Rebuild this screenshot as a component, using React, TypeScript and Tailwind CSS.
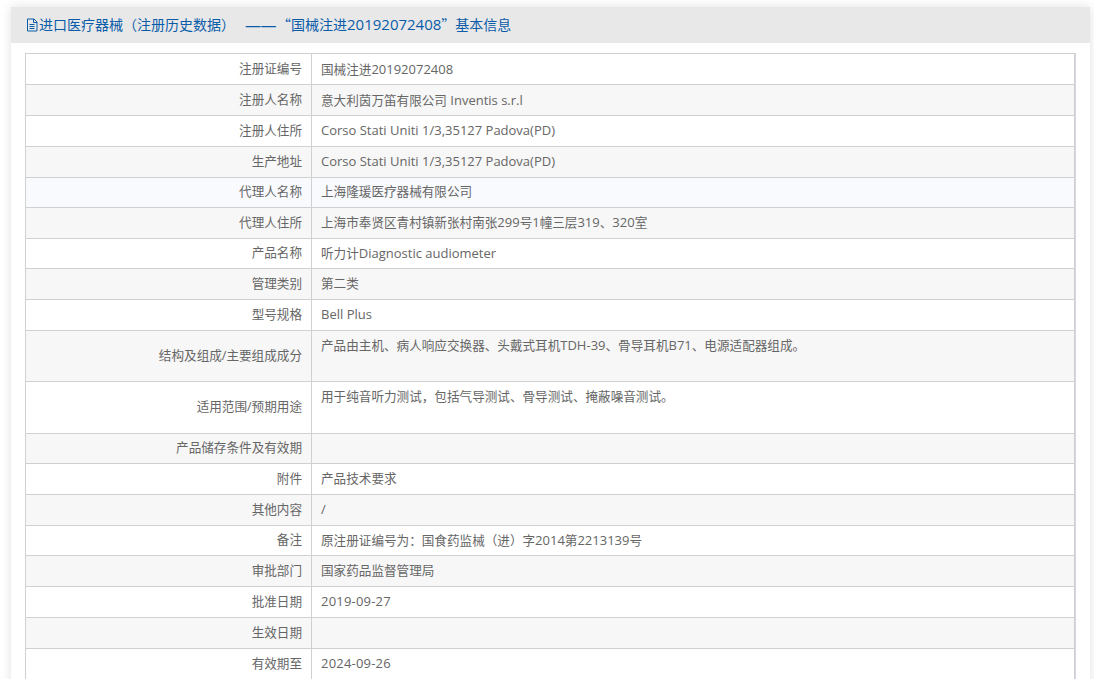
import React from 'react';

interface InfoRow {
  label: string;
  value: string;
  height: number;
}

const rows: InfoRow[] = [
  { label: '注册证编号', value: '国械注进20192072408', height: 31 },
  { label: '注册人名称', value: '意大利茵万笛有限公司 Inventis s.r.l', height: 31 },
  { label: '注册人住所', value: 'Corso Stati Uniti 1/3,35127 Padova(PD)', height: 31 },
  { label: '生产地址', value: 'Corso Stati Uniti 1/3,35127 Padova(PD)', height: 31 },
  { label: '代理人名称', value: '上海隆瑗医疗器械有限公司', height: 30 },
  { label: '代理人住所', value: '上海市奉贤区青村镇新张村南张299号1幢三层319、320室', height: 31 },
  { label: '产品名称', value: '听力计Diagnostic audiometer', height: 30 },
  { label: '管理类别', value: '第二类', height: 31 },
  { label: '型号规格', value: 'Bell Plus', height: 31 },
  { label: '结构及组成/主要组成成分', value: '产品由主机、病人响应交换器、头戴式耳机TDH-39、骨导耳机B71、电源适配器组成。', height: 51 },
  { label: '适用范围/预期用途', value: '用于纯音听力测试，包括气导测试、骨导测试、掩蔽噪音测试。', height: 52 },
  { label: '产品储存条件及有效期', value: '', height: 30 },
  { label: '附件', value: '产品技术要求', height: 31 },
  { label: '其他内容', value: '/', height: 31 },
  { label: '备注', value: '原注册证编号为：国食药监械（进）字2014第2213139号', height: 30 },
  { label: '审批部门', value: '国家药品监督管理局', height: 31 },
  { label: '批准日期', value: '2019-09-27', height: 31 },
  { label: '生效日期', value: '', height: 31 },
  { label: '有效期至', value: '2024-09-26', height: 31 },
];

// Latin runs sit a little larger than the CJK text around them
const Mixed: React.FC<{ text: string }> = ({ text }) => {
  const parts = text.split(/([\x20-\x7e]+)/).filter(Boolean);
  return (
    <>
      {parts.map((part, i) =>
        /^[\x20-\x7e]+$/.test(part) ? (
          <span key={i} className={`text-[13px] ${/^\d{4}-\d{2}-\d{2}$/.test(part) ? 'tracking-[0.2px]' : ''}`}>
            {part}
          </span>
        ) : (
          <span key={i}>{part}</span>
        ),
      )}
    </>
  );
};

const rowBg = (i: number) => {
  // the agent name row was under the mouse in the screenshot
  if (i === 4) return 'bg-[#f8fafe]';
  return i % 2 === 1 ? 'bg-[#f7f7f7]' : 'bg-white';
};

const valueAlign = (row: InfoRow) => {
  if (row.height === 51) return 'pt-[5px] align-top';
  if (row.height === 52) return 'pt-[6px] align-top';
  return 'align-middle';
};

const App: React.FC = () => {
  return (
    <div className="h-[679px] overflow-hidden bg-white pl-[11px] pr-1 pt-[7px] font-['Open_Sans','Noto_Sans_CJK_SC',sans-serif]">
      <div className="h-[800px] bg-white shadow-[0_0_10px_rgba(0,0,0,0.12)]">
        {/* Header */}
        <div className="flex h-9 items-center bg-[#e8e8e8] pb-px pl-[15px] text-[14px] text-[#0a5ca8]">
          <svg viewBox="0 0 12 14" className="mr-px h-[14px] w-[12px]" fill="none" stroke="currentColor" strokeWidth="1">
            <path d="M1.5 1v12h9.5V4L8 1z" />
            <path d="M7.5 1v3.5H11M3.5 6.5h5M3.5 8.5h5M3.5 10.5h5" />
          </svg>
          <span>进口医疗器械（注册历史数据）</span>
          <span className="ml-[10px] text-[16px] tracking-[-0.5px]">——</span>
          <span className="ml-px font-['Noto_Sans_CJK_SC',sans-serif]">“</span>
          <span>国械注进</span>
          <span className="text-[15px]">20192072408</span>
          <span className="font-['Noto_Sans_CJK_SC',sans-serif]">”基本信息</span>
        </div>

        {/* Detail table */}
        <div className="px-[14px] pt-[10px]">
          <div className="w-[1051px] border-r border-[#d6d6e0]">
            <table className="w-[1050px] table-fixed border-collapse text-[12.6px] text-[#666]">
              <colgroup>
                <col className="w-[286px]" />
                <col />
              </colgroup>
              <tbody>
                {rows.map((row, i) => (
                  <tr key={row.label} className={rowBg(i)} style={{ height: row.height }}>
                    <td className={`border border-[#d0d0d0] pl-2 pr-[9px] text-right align-middle ${i < 2 ? 'pt-px' : ''}`}>{row.label}</td>
                    <td className={`border border-[#d0d0d0] pl-[9px] pr-2 ${i < 2 ? 'pt-px' : ''} ${valueAlign(row)}`}>
                      <Mixed text={row.value} />
                    </td>
                  </tr>
                ))}
              </tbody>
            </table>
          </div>
        </div>
      </div>
    </div>
  );
};

export default App;
